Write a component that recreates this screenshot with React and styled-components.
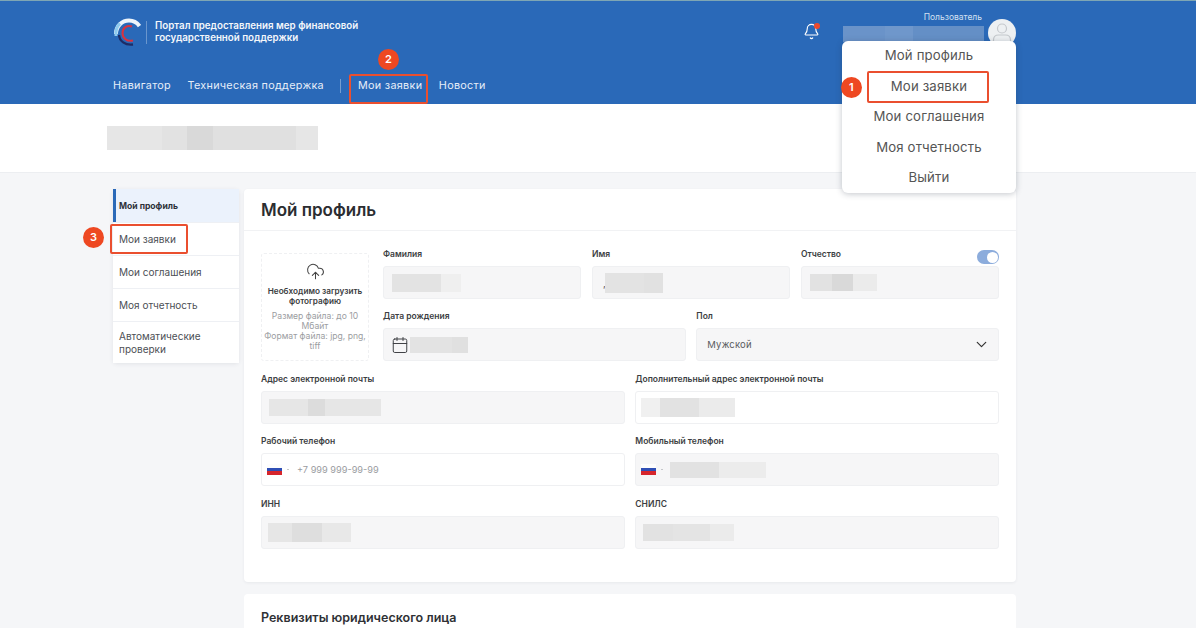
import styled, { createGlobalStyle } from 'styled-components';
import { Bell, Calendar, ChevronDown, CloudUpload } from 'lucide-react';

const menuItems = ['Мой профиль', 'Мои заявки', 'Мои соглашения', 'Моя отчетность', 'Выйти'];

function Blur({ h, ml = 0, parts }) {
  return (
    <BlurRow $h={h} $ml={ml}>
      {parts.map(([w, c], i) => (
        <BlurPart key={i} $w={w} $c={c} />
      ))}
    </BlurRow>
  );
}

function Logo() {
  return (
    <svg width="28" height="30" viewBox="0 0 28 30" fill="none">
      <path d="M3 17C3 9 9 3.500 16 3.500c4 0 8 2 10.500 5.500" stroke="#eef5fb" strokeWidth="4" />
      <path d="M3 19C2.500 13 4 9 7 6.500" stroke="#8fcbee" strokeWidth="3" />
      <path d="M19 9.500C14 7.500 9.500 11 9.500 16c0 5 4.500 9 10.500 7.500" stroke="#d8333f" strokeWidth="2" />
      <path d="M6 18c.5 6 6 10.500 14 9.500" stroke="#1d2c66" strokeWidth="2.400" />
    </svg>
  );
}

function Avatar() {
  return (
    <svg width="28" height="28" viewBox="0 0 28 28" fill="none">
      <circle cx="14" cy="14" r="14" fill="#edf0f2" />
      <circle cx="14" cy="9.500" r="4.500" stroke="#c4c8cc" strokeWidth="1.200" />
      <path d="M5.500 24v-3c0-3 2-5 5-5h7c3 0 5 2 5 5v3" stroke="#c4c8cc" strokeWidth="1.200" />
    </svg>
  );
}

function Field({ label, white, pad = 8, children, toggle }) {
  return (
    <div>
      <LabelRow>
        <FieldLabel>{label}</FieldLabel>
        {toggle && <Toggle />}
      </LabelRow>
      <InputBox $white={white} $pad={pad}>
        {children}
      </InputBox>
    </div>
  );
}

export default function App() {
  return (
    <Page>
      <GlobalStyle />
      <Header>
        <Container>
          <HeaderTop>
            <Brand>
              <Logo />
              <BrandLine />
              <BrandText>
                Портал предоставления мер финансовой
                <br />
                государственной поддержки
              </BrandText>
            </Brand>
            <UserArea>
              <BellBox>
                <Bell size={17} strokeWidth={1.600} color="#fff" />
                <BellDot />
              </BellBox>
              <UserInfo>
                <UserRole>Пользователь</UserRole>
                <Blur h={16} parts={[[42, '#6a93c9'], [28, '#6f97cb'], [71, '#648fc6']]} />
              </UserInfo>
              <Avatar />
            </UserArea>
            <Dropdown>
              {menuItems.map((item) => (
                <DropdownItem key={item}>
                  {item}
                  {item === 'Мои заявки' && (
                    <>
                      <MenuMark />
                      <MenuBadge>1</MenuBadge>
                    </>
                  )}
                </DropdownItem>
              ))}
            </Dropdown>
          </HeaderTop>
          <Nav>
            <NavLink>Навигатор</NavLink>
            <NavLink>Техническая поддержка</NavLink>
            <NavDivider />
            <NavLink>
              Мои заявки
              <NavMark />
              <NavBadge>2</NavBadge>
            </NavLink>
            <NavLink>Новости</NavLink>
          </Nav>
        </Container>
      </Header>

      <Band>
        <Blur h={24} parts={[[55, '#e6e6e6'], [25, '#e2e2e2'], [26, '#d9d9d9'], [83, '#e0e0e0'], [22, '#e6e6e6']]} />
      </Band>

      <Container>
        <Columns>
          <Sidebar>
            <SideItem $active>Мой профиль</SideItem>
            <SideItem>
              Мои заявки
              <SideMark />
              <SideBadge>3</SideBadge>
            </SideItem>
            <SideItem>Мои соглашения</SideItem>
            <SideItem>Моя отчетность</SideItem>
            <SideItem $tall>Автоматические проверки</SideItem>
          </Sidebar>

          <MainColumn>
            <Card>
              <CardTitle>Мой профиль</CardTitle>
              <Form>
                <TopGrid>
                  <Upload>
                    <CloudUpload size={19} strokeWidth={1.300} color="#444" />
                    <UploadTitle>Необходимо загрузить фотографию</UploadTitle>
                    <UploadHint>
                      Размер файла: до 10 Мбайт
                      <br />
                      Формат файла: jpg, png, tiff
                    </UploadHint>
                  </Upload>
                  <TopFields>
                    <Row3>
                      <Field label="Фамилия">
                        <Blur h={18} parts={[[49, '#e3e3e3'], [20, '#efefef']]} />
                      </Field>
                      <Field label="Имя" pad={10}>
                        <Comma>,</Comma>
                        <Blur h={20} ml={-1} parts={[[39, '#e3e3e3'], [19, '#e1e1e1']]} />
                      </Field>
                      <Field label="Отчество" toggle>
                        <Blur h={17} parts={[[22, '#e2e2e2'], [21, '#d9d9d9'], [24, '#ebebeb']]} />
                      </Field>
                    </Row3>
                    <Row2>
                      <Field label="Дата рождения" pad={7}>
                        <Calendar size={18} strokeWidth={1.300} color="#3c3e42" />
                        <Blur h={16} ml={1} parts={[[42, '#e3e3e3'], [16, '#e0e0e0']]} />
                      </Field>
                      <Field label="Пол" pad={10}>
                        <FieldValue>Мужской</FieldValue>
                        <Chevron>
                          <ChevronDown size={17} strokeWidth={1.700} color="#333" />
                        </Chevron>
                      </Field>
                    </Row2>
                  </TopFields>
                </TopGrid>

                <Row2>
                  <Field label="Адрес электронной почты" pad={7}>
                    <Blur h={17} parts={[[39, '#e6e6e6'], [17, '#dcdcdc'], [56, '#e6e6e6']]} />
                  </Field>
                  <Field label="Дополнительный адрес электронной почты" white pad={5}>
                    <Blur h={19} parts={[[19, '#f0f0f0'], [39, '#e2e2e2'], [36, '#ebebeb']]} />
                  </Field>
                </Row2>
                <Row2>
                  <Field label="Рабочий телефон" white pad={5}>
                    <Flag />
                    <FlagArrow />
                    <Placeholder>+7 999 999-99-99</Placeholder>
                  </Field>
                  <Field label="Мобильный телефон" pad={5}>
                    <Flag />
                    <FlagArrow />
                    <Blur h={16} ml={-1} parts={[[49, '#e2e2e2'], [47, '#ececec']]} />
                  </Field>
                </Row2>
                <Row2>
                  <Field label="ИНН" pad={6}>
                    <Blur h={19} parts={[[24, '#e6e6e6'], [30, '#dedede'], [29, '#e8e8e8']]} />
                  </Field>
                  <Field label="СНИЛС" pad={7}>
                    <Blur h={17} parts={[[30, '#e2e2e2'], [37, '#e4e4e4'], [24, '#ebebeb']]} />
                  </Field>
                </Row2>
              </Form>
            </Card>

            <NextCard>
              <NextTitle>Реквизиты юридического лица</NextTitle>
            </NextCard>
          </MainColumn>
        </Columns>
      </Container>
    </Page>
  );
}

const GlobalStyle = createGlobalStyle`
  html, body {
    margin: 0;
    padding: 0;
    height: 628px;
    overflow: hidden;
    background: #f5f6f8;
  }
  * {
    box-sizing: border-box;
  }
`;

const Page = styled.div`
  height: 628px;
  overflow: hidden;
  font-family: Inter, "Noto Sans", sans-serif;
  color: #333;
`;

const Container = styled.div`
  width: 903px;
  margin-left: 113px;
`;

const Header = styled.header`
  height: 104px;
  background: #2a69b8;
  border-top: 1px solid #7ea6b4;
`;

const HeaderTop = styled.div`
  position: relative;
  display: flex;
  justify-content: space-between;
  align-items: flex-start;
  padding-top: 16px;
`;

const Brand = styled.div`
  display: flex;
  align-items: center;
`;

const BrandLine = styled.div`
  width: 1px;
  height: 23px;
  margin: 0 8px 0 5px;
  background: rgba(255, 255, 255, 0.3);
`;

const BrandText = styled.div`
  font-size: 9.75px;
  font-weight: 600;
  line-height: 12.500px;
  color: #f4f7fb;
`;

const UserArea = styled.div`
  display: flex;
  align-items: flex-start;
  margin-top: 2px;
`;

const BellBox = styled.div`
  position: relative;
  width: 17px;
  height: 17px;
  margin: 4px 23px 0 0;
`;

const BellDot = styled.span`
  position: absolute;
  top: 0;
  right: 0;
  width: 6px;
  height: 6px;
  border-radius: 50%;
  background: #ee4a2c;
`;

const UserInfo = styled.div`
  display: flex;
  flex-direction: column;
  align-items: flex-end;
  margin: -8px 4px 0 0;
`;

const UserRole = styled.div`
  height: 15px;
  margin-right: 2px;
  font-size: 8.5px;
  line-height: 12px;
  color: #d3e0f1;
`;

const BlurRow = styled.div`
  display: flex;
  flex: none;
  height: ${(p) => p.$h}px;
  margin-left: ${(p) => p.$ml}px;
`;

const BlurPart = styled.div`
  width: ${(p) => p.$w}px;
  background: ${(p) => p.$c};
`;

const Dropdown = styled.div`
  position: absolute;
  top: 40px;
  right: 0;
  z-index: 5;
  width: 174px;
  height: 152px;
  display: flex;
  flex-direction: column;
  background: #fff;
  border-radius: 6px;
  box-shadow: 0 1px 6px rgba(40, 50, 70, 0.28);
`;

const DropdownItem = styled.div`
  position: relative;
  flex: none;
  height: 30.500px;
  line-height: 30.500px;
  text-align: center;
  font-size: 13.2px;
  letter-spacing: 0.15px;
  color: #555;

  &:first-child {
    margin-top: -1px;
  }
`;

const Mark = styled.span`
  position: absolute;
  border: 2px solid #ea4f2f;
  border-radius: 2px;
  pointer-events: none;
`;

const Badge = styled.span`
  position: absolute;
  width: 21px;
  height: 21px;
  border-radius: 50%;
  background: #ee4822;
  color: #fff;
  font-size: 11px;
  font-weight: 600;
  line-height: 21px;
  text-align: center;
`;

const MenuMark = styled(Mark)`
  top: 0;
  left: 25px;
  width: 122px;
  height: 32px;
`;

const MenuBadge = styled(Badge)`
  top: 6px;
  left: -1px;
`;

const Nav = styled.nav`
  display: flex;
  align-items: center;
  gap: 16.500px;
  margin-top: 30px;
`;

const NavLink = styled.a`
  position: relative;
  font-size: 10.8px;
  line-height: 18px;
  letter-spacing: 0.3px;
  color: #e6eef8;
  white-space: nowrap;
`;

const NavDivider = styled.span`
  width: 1px;
  height: 14px;
  background: rgba(255, 255, 255, 0.35);
`;

const NavMark = styled(Mark)`
  top: -3px;
  left: -9px;
  width: 79px;
  height: 30px;
`;

const NavBadge = styled(Badge)`
  top: -28px;
  left: 20px;
`;

const Band = styled.div`
  height: 69px;
  padding: 22px 0 0 107px;
  background: #fff;
  border-bottom: 1px solid #eceef1;
`;

const Columns = styled.div`
  display: flex;
  gap: 5px;
  padding-top: 16px;
`;

const Sidebar = styled.aside`
  flex: none;
  align-self: flex-start;
  width: 126px;
  display: flex;
  flex-direction: column;
  gap: 1px;
  background: #eef0f4;
  border-radius: 4px;
  box-shadow: 0 1px 4px rgba(60, 70, 90, 0.1);
`;

const SideItem = styled.div`
  position: relative;
  display: flex;
  align-items: center;
  height: ${(p) => (p.$tall ? '41px' : p.$active ? '33px' : '32px')};
  padding: ${(p) => (p.$active ? '2px 0 0 3px' : '0 0 0 6px')};
  font-size: ${(p) => (p.$active ? '8.6px' : '10px')};
  font-weight: ${(p) => (p.$active ? 700 : 400)};
  line-height: 12.500px;
  color: ${(p) => (p.$active ? '#2d3138' : '#4c4f55')};
  background: ${(p) => (p.$active ? '#ebf2fc' : '#fff')};
  border-left: ${(p) => (p.$active ? '3px solid #2a69b8' : 'none')};
`;

const SideMark = styled(Mark)`
  top: 1px;
  left: -3px;
  width: 78px;
  height: 30px;
`;

const SideBadge = styled(Badge)`
  top: 4px;
  left: -30px;
`;

const MainColumn = styled.main`
  flex: none;
  width: 772px;
  display: flex;
  flex-direction: column;
  gap: 12px;
`;

const Card = styled.section`
  background: #fff;
  border-radius: 4px;
  box-shadow: 0 1px 3px rgba(60, 70, 90, 0.07);
`;

const CardTitle = styled.h2`
  height: 42px;
  margin: 0;
  padding-left: 17px;
  font-size: 17px;
  font-weight: 600;
  line-height: 42px;
  color: #2b2d31;
  border-bottom: 1px solid #f1f2f4;
`;

const Form = styled.div`
  display: flex;
  flex-direction: column;
  gap: 10.400px;
  padding: 16px 17px 33px;
`;

const TopGrid = styled.div`
  display: grid;
  grid-template-columns: 108px 1fr;
  gap: 14px;
`;

const Upload = styled.div`
  display: flex;
  flex-direction: column;
  align-items: center;
  margin-top: 6px;
  padding: 8px 2px 0;
  text-align: center;
  border: 1px dashed #eff0f2;
  border-radius: 3px;
`;

const UploadTitle = styled.div`
  margin-top: 5px;
  font-size: 8.2px;
  font-weight: 600;
  line-height: 10px;
  color: #3a3c40;
`;

const UploadHint = styled.div`
  margin-top: 5px;
  font-size: 8.6px;
  line-height: 10px;
  color: #9b9da1;
`;

const TopFields = styled.div`
  display: flex;
  flex-direction: column;
  gap: 10.400px;
`;

const Row3 = styled.div`
  display: grid;
  grid-template-columns: repeat(3, 1fr);
  gap: 11px;
`;

const Row2 = styled.div`
  display: grid;
  grid-template-columns: repeat(2, 1fr);
  gap: 10.600px;
`;

const LabelRow = styled.div`
  display: flex;
  justify-content: space-between;
  align-items: flex-start;
  height: 13px;
  margin-bottom: 6px;
`;

const FieldLabel = styled.label`
  font-size: 8.5px;
  font-weight: 600;
  line-height: 14px;
  color: #3c3e42;
`;

const Toggle = styled.span`
  position: relative;
  display: block;
  width: 22px;
  height: 14px;
  margin-top: 3px;
  border-radius: 7px;
  background: #8cacdc;

  &::after {
    content: '';
    position: absolute;
    top: 1.500px;
    right: 1.500px;
    width: 11px;
    height: 11px;
    border-radius: 50%;
    background: #fff;
  }
`;

const InputBox = styled.div`
  position: relative;
  display: flex;
  align-items: center;
  height: 33px;
  padding-left: ${(p) => p.$pad}px;
  background: ${(p) => (p.$white ? '#fff' : '#f6f6f7')};
  border: 1px solid #eff0f2;
  border-radius: 3px;
`;

const Comma = styled.span`
  font-size: 10px;
  color: #555;
`;

const FieldValue = styled.span`
  font-size: 9.5px;
  letter-spacing: 0.2px;
  color: #5a5c60;
`;

const Chevron = styled.span`
  position: absolute;
  top: 7px;
  right: 8px;
  display: flex;
`;

const Flag = styled.span`
  flex: none;
  width: 15px;
  height: 11px;
  background: linear-gradient(#fdfdfd 0 33%, #2f4fb5 33% 62%, #d6252c 62% 100%);
`;

const FlagArrow = styled.span`
  flex: none;
  width: 2px;
  height: 1px;
  margin: 0 8px 0 5px;
  background: #c4c6ca;
`;

const Placeholder = styled.span`
  font-size: 9.2px;
  color: #9a9c9f;
`;

const NextCard = styled.section`
  height: 60px;
  padding: 16px 17px 0;
  background: #fff;
  border-radius: 4px;
`;

const NextTitle = styled.h3`
  margin: 0;
  font-size: 12.5px;
  font-weight: 600;
  line-height: 16px;
  color: #2f3135;
`;
